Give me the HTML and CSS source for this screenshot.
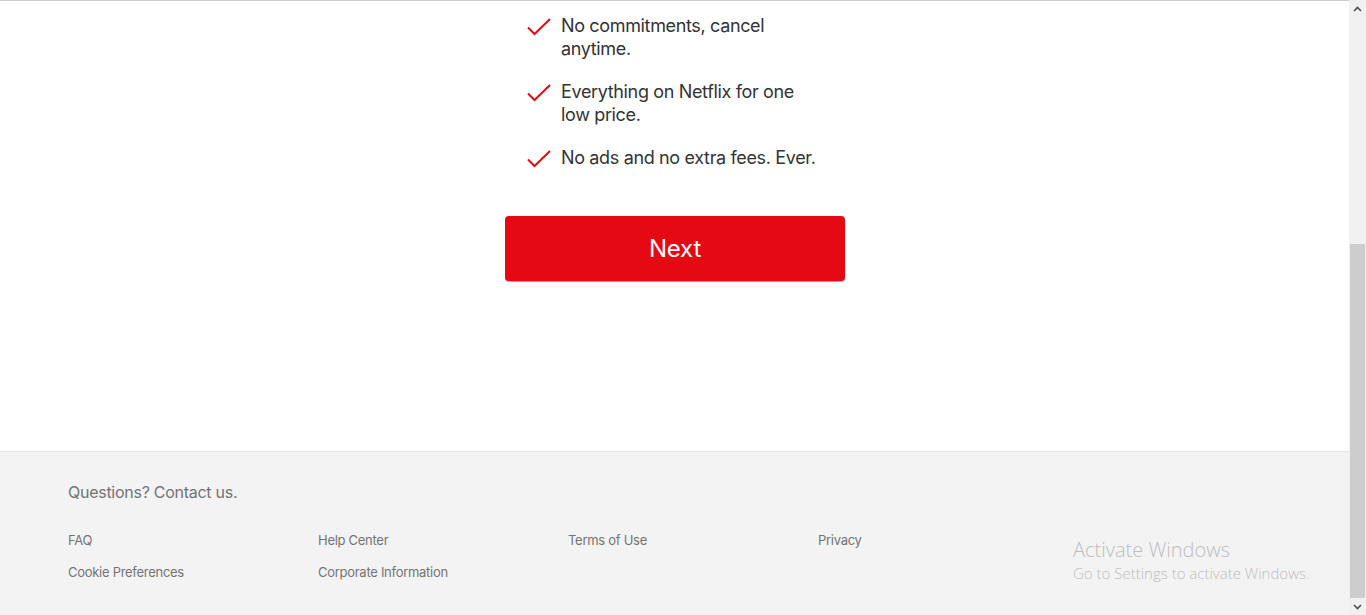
FILE: index.html
```html
<!DOCTYPE html>
<html lang="en">
<head>
<meta charset="utf-8">
<title>Netflix - Choose your plan</title>
<link rel="stylesheet" href="styles.css">
</head>
<body>
<div class="window">
  <div class="page">
    <main class="main">
      <div class="step">
        <ul class="checks">
          <li class="check-item">
            <svg class="check-icon" viewBox="0 0 24 18" width="24" height="18" aria-hidden="true"><polyline points="1,9.5 7.5,16 23,1" fill="none" stroke="#e50914" stroke-width="2"/></svg>
            <span class="check-text">No commitments, cancel anytime.</span>
          </li>
          <li class="check-item">
            <svg class="check-icon" viewBox="0 0 24 18" width="24" height="18" aria-hidden="true"><polyline points="1,9.5 7.5,16 23,1" fill="none" stroke="#e50914" stroke-width="2"/></svg>
            <span class="check-text">Everything on Netflix for one low price.</span>
          </li>
          <li class="check-item">
            <svg class="check-icon" viewBox="0 0 24 18" width="24" height="18" aria-hidden="true"><polyline points="1,9.5 7.5,16 23,1" fill="none" stroke="#e50914" stroke-width="2"/></svg>
            <span class="check-text">No ads and no extra fees. Ever.</span>
          </li>
        </ul>
        <button class="next-btn" type="button">Next</button>
      </div>
    </main>
    <footer class="footer">
      <p class="footer-top">Questions? Contact us.</p>
      <ul class="footer-links">
        <li><a href="#">FAQ</a></li>
        <li><a href="#">Help Center</a></li>
        <li><a href="#">Terms of Use</a></li>
        <li><a href="#">Privacy</a></li>
        <li><a href="#">Cookie Preferences</a></li>
        <li><a href="#">Corporate Information</a></li>
      </ul>
    </footer>
    <div class="watermark">
      <div class="wm-title">Activate Windows</div>
      <div class="wm-sub">Go to Settings to activate Windows.</div>
    </div>
  </div>
  <div class="scrollbar" aria-hidden="true">
    <div class="sb-arrow">
      <svg viewBox="0 0 9 6" width="9" height="6"><polyline points="1,5 4.5,1.5 8,5" fill="none" stroke="#505050" stroke-width="1.6"/></svg>
    </div>
    <div class="sb-track"></div>
    <div class="sb-thumb"></div>
    <div class="sb-arrow">
      <svg viewBox="0 0 9 6" width="9" height="6"><polyline points="1,1 4.5,4.5 8,1" fill="none" stroke="#505050" stroke-width="1.6"/></svg>
    </div>
  </div>
</div>
</body>
</html>
```

FILE: styles.css
```css
* { box-sizing: border-box; }
html, body { margin: 0; padding: 0; height: 100%; overflow: hidden; }
body {
  font-family: Inter, "Noto Sans", "Liberation Sans", sans-serif;
  color: #333;
  background: #fff;
}
.window {
  display: flex;
  height: 615px;
  width: 1366px;
}
.page {
  position: relative;
  flex: 1;
  display: flex;
  flex-direction: column;
  border-top: 1px solid #cccccc;
  min-width: 0;
}
.main {
  height: 450px;
  display: flex;
  justify-content: center;
}
.step {
  width: 340px;
  margin-left: 1px;
  padding-top: 13px;
}
.checks {
  list-style: none;
  margin: 0;
  padding: 0 0 0 22px;
  display: flex;
  flex-direction: column;
  gap: 20px;
}
.check-item {
  display: flex;
  align-items: flex-start;
  gap: 10px;
}
.check-icon {
  flex: none;
  margin-top: 4px;
}
.check-text {
  font-size: 18px;
  line-height: 23px;
  letter-spacing: -0.35px;
  width: 264px;
  color: #333;
}
.next-btn {
  display: block;
  width: 340px;
  height: 65px;
  margin-top: 47px;
  border: none;
  border-radius: 4px;
  background: #e50914;
  color: #fff;
  font-family: inherit;
  font-size: 24px;
  font-weight: 400;
  letter-spacing: -0.2px;
  box-shadow: 0 1px 0 rgba(0,0,0,0.35);
  padding: 0;
}
.footer {
  flex: 1;
  background: #f3f3f3;
  border-top: 1px solid #e6e6e6;
  padding: 29px 0 0 68px;
  color: #737373;
}
.footer-top {
  margin: 0 0 29px;
  font-size: 16px;
  line-height: 22px;
  letter-spacing: -0.27px;
}
.footer-links {
  list-style: none;
  margin: 0;
  padding: 0;
  display: grid;
  grid-template-columns: repeat(4, 250px);
  row-gap: 16px;
}
.footer-links li {
  font-size: 13px;
  line-height: 16px;
  letter-spacing: -0.28px;
}
.footer-links a {
  color: #737373;
  text-decoration: none;
}
.watermark {
  position: absolute;
  left: 1073px;
  top: 536px;
  color: #bdbdbd;
  font-family: "Open Sans", "Noto Sans", sans-serif;
  font-weight: 300;
}
.wm-title { font-size: 20px; line-height: 26px; }
.wm-sub { font-size: 15px; line-height: 20px; }
.scrollbar {
  width: 17px;
  flex: none;
  background: #f0f0f0;
  display: flex;
  flex-direction: column;
}
.sb-arrow {
  height: 17px;
  display: flex;
  align-items: center;
  justify-content: center;
  flex: none;
}
.sb-track { height: 227px; flex: none; }
.sb-thumb { flex: 1; background: #cdcdcd; margin: 0 1px; }
```
